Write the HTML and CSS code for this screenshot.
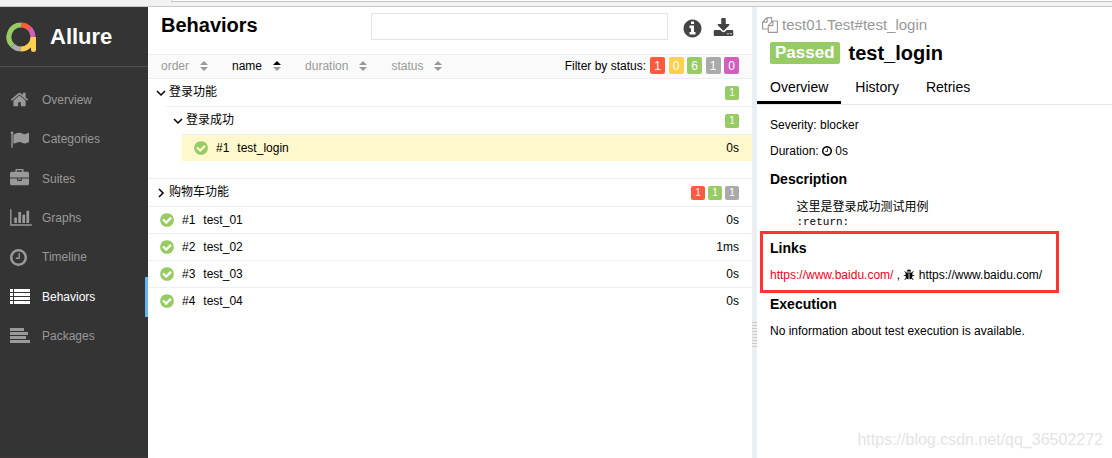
FILE: index.html
```html
<!DOCTYPE html>
<html lang="en">

<head>
    <meta charset="UTF-8">
    <meta name="viewport" content="width=device-width, initial-scale=1.0">
    <title>Allure Report</title>
    <link rel="stylesheet" href="styles.css">
</head>

<body>
    <!-- Icon set -->
    <svg class="sprite" aria-hidden="true">
        <symbol id="home" viewBox="0 0 1792 1792"><path d="M1472 992v480q0 26-19 45t-45 19h-384v-384h-256v384h-384q-26 0-45-19t-19-45v-480q0-1 .5-3t.5-3l575-474 575 474q1 2 1 6zm223-69l-62 74q-8 9-21 11h-3q-13 0-21-7l-692-577-692 577q-12 8-24 7-13-2-21-11l-62-74q-8-10-7-23.5t11-21.5l719-599q32-26 76-26t76 26l244 204v-195q0-14 9-23t23-9h192q14 0 23 9t9 23v408l219 182q10 8 11 21.5t-7 23.5z"/></symbol>
        <symbol id="flag" viewBox="0 0 1792 1792"><path d="M320 256q0 72-64 110v1266q0 13-9.500 22.500t-22.500 9.500h-64q-13 0-22.500-9.500t-9.500-22.500v-1266q-64-38-64-110 0-53 37.500-90.500t90.500-37.500 90.500 37.500 37.500 90.500zm1472 64v763q0 25-12.500 38.500t-39.500 27.500q-215 116-369 116-61 0-123.500-22t-108.500-48-115.500-48-142.500-22q-192 0-464 146-17 9-33 9-26 0-45-19t-19-45v-742q0-32 31-55 21-14 79-43 236-120 421-120 107 0 200 29t219 88q38 19 88 19 54 0 117.500-21t110-47 88-47 54.500-21q26 0 45 19t19 45z"/></symbol>
        <symbol id="briefcase" viewBox="0 0 1792 1792"><path d="M640 256h512v-128h-512v128zm1152 640v480q0 66-47 113t-113 47h-1472q-66 0-113-47t-47-113v-480h672v160q0 26 19 45t45 19h320q26 0 45-19t19-45v-160h672zm-768 0v128h-256v-128h256zm768-480v384h-1792v-384q0-66 47-113t113-47h352v-160q0-40 28-68t68-28h576q40 0 68 28t28 68v160h352q66 0 113 47t47 113z"/></symbol>
        <symbol id="chart" viewBox="0 0 2048 1792"><path d="M640 896v512h-256v-512h256zm384-512v1024h-256v-1024h256zm1024 1152v128h-2048v-1536h128v1408h1920zm-640-896v768h-256v-768h256zm384-384v1152h-256v-1152h256z"/></symbol>
        <symbol id="clock" viewBox="128 128 1536 1536"><path d="M1024 544v448q0 14-9 23t-23 9h-320q-14 0-23-9t-9-23v-64q0-14 9-23t23-9h224v-352q0-14 9-23t23-9h64q14 0 23 9t9 23zm416 352q0-148-73-273t-198-198-273-73-273 73-198 198-73 273 73 273 198 198 273 73 273-73 198-198 73-273zm224 0q0 209-103 385.500t-279.500 279.500-385.500 103-385.500-103-279.500-279.500-103-385.500 103-385.500 279.500-279.500 385.500-103 385.500 103 279.500 279.500 103 385.500z"/></symbol>
        <symbol id="list" viewBox="0 0 20 16"><path d="M0 0h3v3H0zM4 0h16v3H4zM0 4h3v3H0zM4 4h16v3H4zM0 8h3v3H0zM4 8h16v3H4zM0 12h3v3H0zM4 12h16v3H4z"/></symbol>
        <symbol id="align" viewBox="0 0 20 16"><path d="M0 0h14v3H0zM0 4h18v3H0zM0 8h16v3H0zM0 12h20v3H0z"/></symbol>
        <symbol id="info" viewBox="0 0 1792 1792"><path d="M1152 1376v-160q0-14-9-23t-23-9h-96v-512q0-14-9-23t-23-9h-320q-14 0-23 9t-9 23v160q0 14 9 23t23 9h96v320h-96q-14 0-23 9t-9 23v160q0 14 9 23t23 9h448q14 0 23-9t9-23zm-128-896v-160q0-14-9-23t-23-9h-192q-14 0-23 9t-9 23v160q0 14 9 23t23 9h192q14 0 23-9t9-23zm640 416q0 209-103 385.500t-279.500 279.500-385.500 103-385.500-103-279.500-279.500-103-385.500 103-385.500 279.500-279.500 385.500-103 385.500 103 279.500 279.500 103 385.500z"/></symbol>
        <symbol id="download" viewBox="0 0 1792 1792"><path d="M1344 1344q0-26-19-45t-45-19-45 19-19 45 19 45 45 19 45-19 19-45zm256 0q0-26-19-45t-45-19-45 19-19 45 19 45 45 19 45-19 19-45zm128-224v320q0 40-28 68t-68 28h-1472q-40 0-68-28t-28-68v-320q0-40 28-68t68-28h465l135 136q58 56 136 56t136-56l136-136h464q40 0 68 28t28 68zm-325-569q17 41-14 70l-448 448q-18 19-45 19t-45-19l-448-448q-31-29-14-70 17-39 59-39h256v-448q0-26 19-45t45-19h256q26 0 45 19t19 45v448h256q42 0 59 39z"/></symbol>
        <symbol id="check" viewBox="0 0 1792 1792"><path d="M1412 734q0-28-18-46l-91-90q-19-19-45-19t-45 19l-408 407-226-226q-19-19-45-19t-45 19l-91 90q-18 18-18 46 0 27 18 45l362 362q19 19 45 19 27 0 46-19l543-543q18-18 18-45zm252 162q0 209-103 385.500t-279.500 279.500-385.500 103-385.500-103-279.500-279.500-103-385.500 103-385.500 279.500-279.500 385.500-103 385.500 103 279.500 279.500 103 385.500z"/></symbol>
        <symbol id="files" viewBox="0 0 1792 1792"><path d="M1696 384q40 0 68 28t28 68v1216q0 40-28 68t-68 28h-960q-40 0-68-28t-28-68v-288h-544q-40 0-68-28t-28-68v-672q0-40 20-88t48-76l408-408q28-28 76-48t88-20h416q40 0 68 28t28 68v328q68-40 128-40h416zm-544 213l-299 299h299v-299zm-640-384l-299 299h299v-299zm196 647l316-316v-416h-384v416q0 40-28 68t-68 28h-416v640h512v-256q0-40 20-88t48-76zm956 804v-1152h-384v416q0 40-28 68t-68 28h-416v640h896z"/></symbol>
        <symbol id="bug" viewBox="0 0 1792 1792"><path d="M1696 960q0 26-19 45t-45 19h-224q0 171-67 290l208 209q19 19 19 45t-19 45q-18 19-45 19t-45-19l-198-197q-5 5-15 13t-42 28.500-65 36.500-82 29-97 13v-896h-128v896q-51 0-101.500-13.500t-87-33-66-39-43.500-32.500l-15-14-183 207q-20 21-48 21-24 0-43-16-19-18-20.500-44.500t15.500-46.500l202-227q-58-114-58-274h-224q-26 0-45-19t-19-45 19-45 45-19h224v-294l-173-173q-19-19-19-45t19-45 45-19 45 19l173 173h844l173-173q19-19 45-19t45 19 19 45-19 45l-173 173v294h224q26 0 45 19t19 45zm-480-576h-640q0-133 93.500-226.500t226.500-93.500 226.500 93.500 93.500 226.500z"/></symbol>
        <symbol id="down" viewBox="0 0 10 10"><path d="M1 3l4 4 4-4" fill="none" stroke="currentColor" stroke-width="1.500"/></symbol>
        <symbol id="right" viewBox="0 0 10 10"><path d="M3 1l4 4-4 4" fill="none" stroke="currentColor" stroke-width="1.500"/></symbol>
    </svg>

    <div class="browser-bar">
        <div class="address"></div>
    </div>

    <div class="app">
        <!-- Side navigation -->
        <nav class="sidebar">
            <div class="brand">
                <svg class="logo" viewBox="0 0 32 32" stroke-width="5">
                    <path d="M28 16A12 12 0 0 1 16 28" stroke="#ffd050"/>
                    <path d="M28.500 16v13" stroke="#ffd050"/>
                    <path d="M28.500 28.500v.1" stroke="#ffd050" stroke-linecap="round"/>
                    <path d="M16 28a12 12 0 0 1-8.500-3.500" stroke="#aaa"/>
                    <path d="M7.500 24.500A12 12 0 0 1 16 4" stroke="#97cc64"/>
                    <path d="M16 4a12 12 0 0 1 8.500 3.500" stroke="#fd5a3e"/>
                    <path d="M24.500 7.500A12 12 0 0 1 28 16" stroke="#d35ebe"/>
                </svg>
                <span class="brand-name">Allure</span>
            </div>
            <div class="menu">
                <a class="menu-item" href="#"><svg class="menu-icon"><use href="#home"/></svg>Overview</a>
                <a class="menu-item" href="#"><svg class="menu-icon"><use href="#flag"/></svg>Categories</a>
                <a class="menu-item" href="#"><svg class="menu-icon"><use href="#briefcase"/></svg>Suites</a>
                <a class="menu-item" href="#"><svg class="menu-icon wide"><use href="#chart"/></svg>Graphs</a>
                <a class="menu-item" href="#"><svg class="menu-icon round"><use href="#clock"/></svg>Timeline</a>
                <a class="menu-item active" href="#"><svg class="menu-icon lines"><use href="#list"/></svg>Behaviors</a>
                <a class="menu-item" href="#"><svg class="menu-icon lines"><use href="#align"/></svg>Packages</a>
            </div>
        </nav>

        <!-- Behaviors tree -->
        <main class="tree-pane">
            <header class="pane-header">
                <h1>Behaviors</h1>
                <input class="search" type="text" aria-label="Search">
                <button class="icon-button" aria-label="Info"><svg><use href="#info"/></svg></button>
                <button class="icon-button" aria-label="Download"><svg><use href="#download"/></svg></button>
            </header>

            <div class="toolbar">
                <button class="sorter">order <span class="arrows"></span></button>
                <button class="sorter sorted">name <span class="arrows"></span></button>
                <button class="sorter">duration <span class="arrows"></span></button>
                <button class="sorter">status <span class="arrows"></span></button>
                <span class="filter-label">Filter by status:</span>
                <div class="filters">
                    <button class="filter failed">1</button>
                    <button class="filter broken">0</button>
                    <button class="filter passed">6</button>
                    <button class="filter skipped">1</button>
                    <button class="filter unknown">0</button>
                </div>
            </div>

            <div class="group">
                <div class="group-title">
                    <svg class="arrow"><use href="#down"/></svg><span class="name">登录功能</span>
                    <span class="count passed">1</span>
                </div>
                <div class="group nested">
                    <div class="group-title">
                        <svg class="arrow"><use href="#down"/></svg><span class="name">登录成功</span>
                        <span class="count passed">1</span>
                    </div>
                    <div class="nested">
                        <a class="leaf selected" href="#"><svg class="check"><use href="#check"/></svg><span class="order">#1</span><span class="name">test_login</span><span>0s</span></a>
                    </div>
                </div>
            </div>

            <div class="group closed">
                <div class="group-title">
                    <svg class="arrow"><use href="#right"/></svg><span class="name">购物车功能</span>
                    <span class="count failed">1</span>
                    <span class="count passed">1</span>
                    <span class="count skipped">1</span>
                </div>
            </div>

            <a class="leaf" href="#"><svg class="check"><use href="#check"/></svg><span class="order">#1</span><span class="name">test_01</span><span>0s</span></a>
            <a class="leaf" href="#"><svg class="check"><use href="#check"/></svg><span class="order">#2</span><span class="name">test_02</span><span>1ms</span></a>
            <a class="leaf" href="#"><svg class="check"><use href="#check"/></svg><span class="order">#3</span><span class="name">test_03</span><span>0s</span></a>
            <a class="leaf" href="#"><svg class="check"><use href="#check"/></svg><span class="order">#4</span><span class="name">test_04</span><span>0s</span></a>
        </main>

        <div class="gutter"><div class="grip"></div></div>

        <!-- Test result -->
        <section class="result">
            <div class="full-name"><svg><use href="#files"/></svg>test01.Test#test_login</div>
            <h2 class="result-title"><span class="status-label passed">Passed</span>test_login</h2>
            <nav class="tabs">
                <a class="tab current" href="#">Overview</a>
                <a class="tab" href="#">History</a>
                <a class="tab" href="#">Retries</a>
            </nav>
            <div class="details">
                <p>Severity: blocker</p>
                <p>Duration: <svg class="inline-icon small"><use href="#clock"/></svg> 0s</p>
                <h3>Description</h3>
                <pre>    <span class="cjk">这里是登录成功测试用例</span>
    :return:</pre>
                <div class="links">
                    <h3>Links</h3>
                    <p><a class="link" href="#">https://www.baidu.com/</a> , <svg class="inline-icon"><use href="#bug"/></svg> <a href="#">https://www.baidu.com/</a></p>
                </div>
                <h3>Execution</h3>
                <p>No information about test execution is available.</p>
            </div>
        </section>
    </div>

    <div class="watermark">https://blog.csdn.net/qq_36502272</div>
</body>

</html>
```
FILE: styles.css
```css
* {
    box-sizing: border-box;
}

body {
    display: flex;
    flex-direction: column;
    min-height: 100vh;
    margin: 0;
    font-family: "Liberation Sans", "Noto Sans CJK SC", sans-serif;
    font-size: 12px;
    line-height: 16px;
    color: #000;
    background: #fff;
}

a {
    color: inherit;
    text-decoration: none;
}

button {
    padding: 0;
    border: none;
    background: none;
    font: inherit;
    color: inherit;
    cursor: pointer;
}

h1, h2, h3, p, pre {
    margin: 0;
}

svg {
    fill: currentColor;
    flex: none;
}

.sprite {
    display: none;
}

.browser-bar {
    height: 7px;
    padding-left: 171px;
    background: #f2f2f2;
    border-bottom: 1px solid #c8c8c8;
}

.address {
    height: 2px;
    background: #fff;
    border: 1px solid #c4c4c4;
    border-width: 0 0 1px 1px;
}

.app {
    flex: 1;
    display: grid;
    grid-template-columns: 148px 604fr 5px 355fr;
}

/* Sidebar */
.sidebar {
    background: #343434;
    color: #999;
    border-bottom: 2px solid #3a3436;
}

.brand {
    display: flex;
    align-items: center;
    gap: 13px;
    height: 60px;
    padding-left: 5px;
    border-bottom: 1px solid #505050;
}

.logo {
    width: 32px;
    height: 32px;
    fill: none;
}

.brand-name {
    font-size: 22px;
    font-weight: bold;
    line-height: 28px;
    color: #fff;
}

.menu {
    display: grid;
    grid-auto-rows: 1fr;
    height: 276px;
    margin-top: 13px;
}

.menu-item {
    display: grid;
    grid-template-columns: 32px 1fr;
    align-items: center;
    padding-left: 10px;
}

.menu-item.active {
    color: #fff;
    border-right: 3px solid #64b5f6;
}

.menu-icon {
    width: 19px;
    height: 19px;
}

.menu-icon.wide {
    width: 22px;
}

.menu-icon.round {
    width: 17px;
    height: 17px;
}

.menu-icon.lines {
    width: 20px;
    height: 16px;
}

/* Tree */
.tree-pane {
    min-width: 0;
}

.pane-header {
    display: flex;
    align-items: center;
    height: 47px;
    padding: 0 17px 8px 13px;
}

h1 {
    flex: 1;
    font-size: 20px;
    line-height: 24px;
    padding-bottom: 4px;
}

.search {
    width: 52%;
    max-width: 297px;
    height: 27px;
    margin-right: 14px;
    border: 1px solid #e3e3e3;
    outline: none;
}

.icon-button {
    width: 22px;
    height: 22px;
    padding-top: 2px;
    color: #444;
}

.icon-button + .icon-button {
    margin-left: 9px;
}

.icon-button svg {
    display: block;
    width: 21px;
    height: 21px;
}

.toolbar {
    display: flex;
    align-items: center;
    height: 25px;
    padding: 0 13px 2px;
    background: #fafafa;
    border-top: 1px solid #eceff1;
    border-bottom: 1px solid #eceff1;
}

.sorter {
    display: flex;
    align-items: center;
    gap: 11px;
    margin-right: 24px;
    color: #999;
}

.arrows {
    display: grid;
    gap: 2px;
}

.arrows::before,
.arrows::after {
    content: "";
    border: 4px solid transparent;
}

.arrows::before {
    border-top: none;
    border-bottom-color: #999;
}

.arrows::after {
    border-bottom: none;
    border-top-color: #999;
}

.sorted {
    color: #000;
}

.sorted .arrows::before {
    border-bottom-color: #000;
}

.filter-label {
    margin-left: auto;
    margin-right: 4px;
}

.filters {
    display: flex;
    justify-content: space-between;
    width: 89px;
}

.filter {
    width: 15px;
    height: 17px;
    border-radius: 2px;
    color: #fff;
}

.passed {
    background: #97cc64;
}

.failed {
    background: #fd5a3e;
}

.broken {
    background: #ffd050;
}

.skipped {
    background: #aaa;
}

.unknown {
    background: #d35ebe;
}

.group-title {
    display: flex;
    align-items: center;
    height: 27px;
    padding: 0 13px 0 8px;
}

.group-title .name {
    padding-bottom: 2px;
}

.arrow {
    width: 10px;
    height: 10px;
    margin-right: 3px;
}

.name {
    flex: 1;
}

.count {
    width: 14px;
    height: 14px;
    margin-left: 3px;
    border-radius: 2px;
    font-size: 10px;
    line-height: 14px;
    text-align: center;
    color: #fff;
}

.nested {
    margin-left: 17px;
    border-top: 1px solid #eceff1;
}

.closed {
    margin-top: 17px;
    border-top: 1px solid #eceff1;
}

.leaf {
    display: flex;
    align-items: center;
    height: 27px;
    padding: 0 13px 0 11px;
    border-top: 1px solid #eceff1;
}

.leaf.selected {
    height: 26px;
    background: #fff8cc;
    border-top: none;
}

.check {
    width: 16px;
    height: 16px;
    margin-right: 7px;
    color: #97cc64;
}

.order {
    margin-right: 8px;
}

/* Splitter */
.gutter {
    display: flex;
    align-items: center;
    padding-top: 204px;
    background: #eceff1;
}

.grip {
    width: 5px;
    height: 25px;
    background: repeating-linear-gradient(#c8c8c8 0 1px, #eceff1 1px 3px);
}

/* Test result */
.result {
    min-width: 0;
}

.full-name {
    display: flex;
    align-items: center;
    gap: 4px;
    padding: 8px 5px 0;
    font-size: 15px;
    line-height: 20px;
    color: #999;
}

.full-name svg {
    width: 16px;
    height: 16px;
}

.result-title {
    display: flex;
    align-items: center;
    gap: 9px;
    padding: 6px 13px 0;
    font-size: 20px;
    line-height: 24px;
}

.status-label {
    padding: 0 5px;
    border-radius: 2px;
    font-size: 17px;
    line-height: 22px;
    color: #fff;
}

.tabs {
    display: flex;
    gap: 1px;
    height: 40px;
    border-bottom: 1px solid #e5e5e5;
    font-size: 14px;
}

.tab {
    padding: 14px 13px 0;
}

.tab.current {
    border-bottom: 3px solid #000;
}

.details {
    padding: 12px 13px;
}

.details p {
    margin-bottom: 10px;
}

h3 {
    padding-top: 1px;
    margin-bottom: 10px;
    font-size: 14px;
    line-height: 18px;
}

.inline-icon {
    width: 12px;
    height: 12px;
    vertical-align: -2px;
}

.inline-icon.small {
    width: 10px;
    height: 10px;
    vertical-align: -1px;
}

pre {
    padding-top: 3px;
    font-family: "Liberation Mono", "Noto Sans CJK SC", monospace;
    font-size: 11px;
    line-height: 14px;
}

.cjk {
    font-size: 12px;
}

.links {
    width: fit-content;
    margin: 2px 0 1px -10px;
    padding: 4px 14px 7px 7px;
    border: 3px solid #fb3535;
}

.links p {
    margin: 0;
}

.link {
    color: #f00022;
}

.watermark {
    position: absolute;
    right: 9px;
    bottom: 8px;
    font-size: 16px;
    line-height: 20px;
    color: #e4e4e4;
}
```
